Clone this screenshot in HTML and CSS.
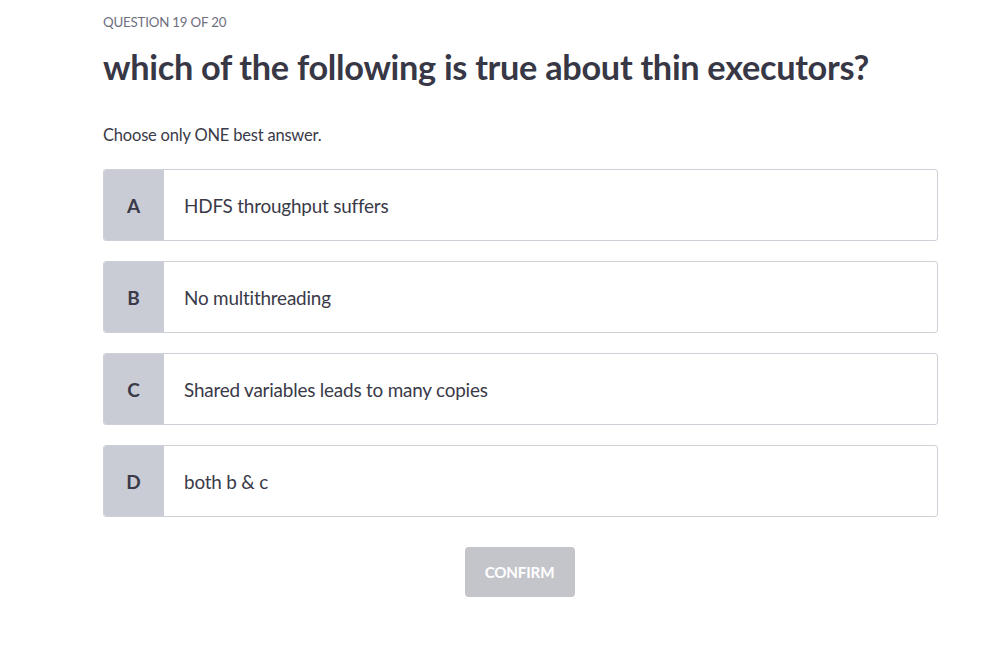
FILE: index.html
```html
<!DOCTYPE html>
<html>
<head>
<meta charset="utf-8">
<link rel="stylesheet" href="styles.css">
</head>
<body>
<main class="quiz">
  <div class="counter">QUESTION 19 OF 20</div>
  <h1 class="question">which of the following is true about thin executors?</h1>
  <p class="hint">Choose only ONE best answer.</p>
  <ul class="options">
    <li class="option"><span class="letter">A</span><span class="text">HDFS throughput suffers</span></li>
    <li class="option"><span class="letter">B</span><span class="text">No multithreading</span></li>
    <li class="option"><span class="letter">C</span><span class="text">Shared variables leads to many copies</span></li>
    <li class="option"><span class="letter">D</span><span class="text">both b &amp; c</span></li>
  </ul>
  <div class="actions"><button class="confirm" disabled>CONFIRM</button></div>
</main>
</body>
</html>
```
FILE: styles.css
```css
html, body {
  margin: 0;
  padding: 0;
  background: #ffffff;
}
body {
  font-family: Lato, "Liberation Sans", sans-serif;
  color: #3a3a48;
}
.quiz {
  width: 835px;
  margin-left: 103px;
  padding-top: 14px;
}
.counter {
  font-size: 13.3px;
  color: #6e6e7e;
  line-height: 16px;
  letter-spacing: -0.2px;
}
.question {
  margin: 15px 0 0 0;
  font-size: 34.3px;
  font-weight: 700;
  line-height: 44px;
  letter-spacing: -0.3px;
  color: #373746;
}
.hint {
  margin: 36px 0 0 0;
  font-size: 16.5px;
  line-height: 20px;
  letter-spacing: -0.2px;
}
.options {
  list-style: none;
  margin: 24px 0 0 0;
  padding: 0;
  display: flex;
  flex-direction: column;
  gap: 20px;
}
.option {
  display: flex;
  align-items: stretch;
  height: 72px;
  box-sizing: border-box;
  border: 1px solid #cfd0d8;
  border-radius: 3px;
  overflow: hidden;
}
.letter {
  width: 61px;
  flex: none;
  background: #c9ccd5;
  display: flex;
  align-items: center;
  justify-content: center;
  font-size: 19px;
  font-weight: 700;
  color: #3a3a48;
  margin: -1px 0 -1px -1px;
}
.text {
  display: flex;
  align-items: center;
  padding-left: 20px;
  font-size: 18.9px;
  letter-spacing: -0.2px;
}
.actions {
  display: flex;
  justify-content: center;
  margin-top: 30px;
}
.confirm {
  width: 110px;
  height: 50px;
  border: none;
  border-radius: 4px;
  background: #c4c5cb;
  color: #ffffff;
  font-family: Lato, "Liberation Sans", sans-serif;
  font-size: 15.2px;
  font-weight: 700;
  letter-spacing: -0.2px;
  margin-left: -2px;
}
```
